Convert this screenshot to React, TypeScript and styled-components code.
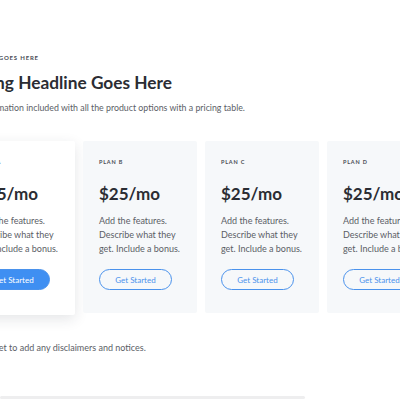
import React from "react";
import styled, { createGlobalStyle } from "styled-components";

const GlobalStyle = createGlobalStyle`
  html, body {
    margin: 0;
    padding: 0;
    background: #ffffff;
    overflow: hidden;
  }
  body {
    font-family: Lato, "Open Sans", sans-serif;
    color: #2b2d33;
  }
`;

const Page = styled.div`
  width: 400px;
  height: 400px;
  overflow: hidden;
  position: relative;
`;

const Section = styled.section`
  margin-left: -39px;
  padding-top: 54px;
`;

const Overline = styled.div`
  font-size: 6px;
  font-weight: 700;
  letter-spacing: 0.8px;
  color: #4a4d55;
  text-transform: uppercase;
  line-height: 8px;
`;

const Headline = styled.h2`
  margin: 9px 0 0;
  font-size: 17.3px;
  font-weight: 700;
  line-height: 24px;
  color: #2b2d33;
`;

const Subtitle = styled.p`
  margin: 6px 0 0;
  font-size: 8.8px;
  line-height: 14px;
  color: #5b5e66;
`;

const Cards = styled.div`
  display: flex;
  gap: 8px;
  margin-top: 26px;
  align-items: flex-start;
`;

const Card = styled.div<{ $featured?: boolean }>`
  flex: 0 0 114px;
  box-sizing: border-box;
  height: ${(p) => (p.$featured ? "174px" : "172px")};
  padding: 17px 16px ${(p) => (p.$featured ? "25px" : "23px")};
  background: ${(p) => (p.$featured ? "#ffffff" : "#f6f8fa")};
  box-shadow: ${(p) =>
    p.$featured ? "0 4px 14px rgba(30, 40, 60, 0.12)" : "none"};
  border-radius: 2px;
  display: flex;
  flex-direction: column;
`;

const PlanName = styled.div`
  font-size: 5.5px;
  font-weight: 700;
  letter-spacing: 0.8px;
  color: #4a4d55;
  line-height: 8px;
`;

const Price = styled.div`
  margin-top: 16px;
  font-size: 17px;
  font-weight: 700;
  line-height: 24px;
  color: #2b2d33;
`;

const Description = styled.p`
  margin: 8px 0 0;
  font-size: 9px;
  line-height: 14px;
  color: #5b5e66;
`;

const Button = styled.button<{ $filled?: boolean }>`
  margin-top: auto;
  width: 73px;
  height: 21px;
  border-radius: 11px;
  border: 1px solid #4a92ec;
  background: ${(p) => (p.$filled ? "#3f8ff2" : "transparent")};
  color: ${(p) => (p.$filled ? "#ffffff" : "#4a92ec")};
  font-family: inherit;
  font-size: 8px;
  padding: 0;
  cursor: pointer;
`;

const Disclaimer = styled.p`
  margin: 27px 0 0;
  font-size: 9px;
  line-height: 12px;
  color: #5b5e66;
`;

const ScrollThumb = styled.div`
  position: absolute;
  left: 0;
  bottom: 1px;
  width: 305px;
  height: 3px;
  background: #eeeeef;
  border-radius: 2px;
`;

const plans = [
  { name: "Plan A", featured: true },
  { name: "Plan B" },
  { name: "Plan C" },
  { name: "Plan D" },
];

export default function App() {
  return (
    <Page>
      <GlobalStyle />
      <Section>
        <Overline>Overline Goes Here</Overline>
        <Headline>Pricing Headline Goes Here</Headline>
        <Subtitle>
          Add information included with all the product options with a
          pricing table.
        </Subtitle>
        <Cards>
          {plans.map((plan) => (
            <Card key={plan.name} $featured={plan.featured}>
              <PlanName>{plan.name.toUpperCase()}</PlanName>
              <Price>$25/mo</Price>
              <Description>
                Add the features. Describe what they get. Include a bonus.
              </Description>
              <Button $filled={plan.featured}>Get Started</Button>
            </Card>
          ))}
        </Cards>
        <Disclaimer>
          Use this set to add any disclaimers and notices.
        </Disclaimer>
      </Section>
      <ScrollThumb />
    </Page>
  );
}
